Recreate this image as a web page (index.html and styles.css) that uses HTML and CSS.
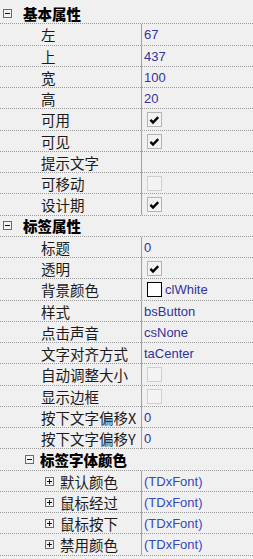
FILE: index.html
```html
<!DOCTYPE html>
<html lang="zh-CN">
<head>
    <meta charset="UTF-8">
    <title>属性</title>
    <link rel="stylesheet" href="styles.css">
</head>
<body>
    <div class="inspector">
        <div class="group">
            <svg class="toggle" viewBox="0 0 9 9"><rect x="0.5" y="0.5" width="8" height="8" /><path d="M2 4.5h5" /></svg>
            <span>基本属性</span>
        </div>
        <div class="row"><div class="name">左</div><div class="value">67</div></div>
        <div class="row"><div class="name">上</div><div class="value">437</div></div>
        <div class="row"><div class="name">宽</div><div class="value">100</div></div>
        <div class="row"><div class="name">高</div><div class="value">20</div></div>
        <div class="row"><div class="name">可用</div><div class="value"><span class="check on"><svg viewBox="0 0 14 14"><path d="M2.6 7.4l2.8 2.8 5.6-5.8" /></svg></span></div></div>
        <div class="row"><div class="name">可见</div><div class="value"><span class="check on"><svg viewBox="0 0 14 14"><path d="M2.6 7.4l2.8 2.8 5.6-5.8" /></svg></span></div></div>
        <div class="row"><div class="name">提示文字</div><div class="value"></div></div>
        <div class="row"><div class="name">可移动</div><div class="value"><span class="check off"></span></div></div>
        <div class="row"><div class="name">设计期</div><div class="value"><span class="check on"><svg viewBox="0 0 14 14"><path d="M2.6 7.4l2.8 2.8 5.6-5.8" /></svg></span></div></div>

        <div class="group">
            <svg class="toggle" viewBox="0 0 9 9"><rect x="0.5" y="0.5" width="8" height="8" /><path d="M2 4.5h5" /></svg>
            <span>标签属性</span>
        </div>
        <div class="row"><div class="name">标题</div><div class="value">0</div></div>
        <div class="row"><div class="name">透明</div><div class="value"><span class="check on"><svg viewBox="0 0 14 14"><path d="M2.6 7.4l2.8 2.8 5.6-5.8" /></svg></span></div></div>
        <div class="row"><div class="name">背景颜色</div><div class="value"><span class="swatch"></span>clWhite</div></div>
        <div class="row"><div class="name">样式</div><div class="value">bsButton</div></div>
        <div class="row"><div class="name">点击声音</div><div class="value">csNone</div></div>
        <div class="row"><div class="name">文字对齐方式</div><div class="value">taCenter</div></div>
        <div class="row"><div class="name">自动调整大小</div><div class="value"><span class="check off"></span></div></div>
        <div class="row"><div class="name">显示边框</div><div class="value"><span class="check off"></span></div></div>
        <div class="row"><div class="name">按下文字偏移X</div><div class="value">0</div></div>
        <div class="row"><div class="name">按下文字偏移Y</div><div class="value">0</div></div>

        <div class="group sub">
            <svg class="toggle" viewBox="0 0 9 9"><rect x="0.5" y="0.5" width="8" height="8" /><path d="M2 4.5h5" /></svg>
            <span>标签字体颜色</span>
        </div>
        <div class="row"><div class="name font"><svg class="toggle" viewBox="0 0 9 9"><rect x="0.5" y="0.5" width="8" height="8" /><path d="M2 4.5h5M4.5 2v5" /></svg>默认颜色</div><div class="value link">(TDxFont)</div></div>
        <div class="row"><div class="name font"><svg class="toggle" viewBox="0 0 9 9"><rect x="0.5" y="0.5" width="8" height="8" /><path d="M2 4.5h5M4.5 2v5" /></svg>鼠标经过</div><div class="value link">(TDxFont)</div></div>
        <div class="row"><div class="name font"><svg class="toggle" viewBox="0 0 9 9"><rect x="0.5" y="0.5" width="8" height="8" /><path d="M2 4.5h5M4.5 2v5" /></svg>鼠标按下</div><div class="value link">(TDxFont)</div></div>
        <div class="row"><div class="name font"><svg class="toggle" viewBox="0 0 9 9"><rect x="0.5" y="0.5" width="8" height="8" /><path d="M2 4.5h5M4.5 2v5" /></svg>禁用颜色</div><div class="value link">(TDxFont)</div></div>
    </div>
</body>
</html>
```

FILE: styles.css
```css
body {
    margin: 0;
    background: #f0f0f0;
    font-family: "Noto Sans CJK SC", sans-serif;
    color: #1a1a1a;
}

.inspector {
    width: 253px;
    padding-top: 3px;
}

.group,
.row {
    height: 21.25px;
    box-sizing: border-box;
    border-bottom: 1px dotted #9a9a9a;
}

.group {
    display: flex;
    align-items: center;
    padding-left: 3px;
    font-size: 14.5px;
    font-weight: 900;
    color: #000;
    white-space: nowrap;
}

.group span {
    margin-left: 11px;
}

.group.sub {
    padding-left: 25px;
}

.group.sub span {
    margin-left: 6px;
}

.toggle {
    width: 9px;
    height: 9px;
    flex: none;
}

.toggle rect {
    fill: #f4f4f4;
    stroke: #6a6a6a;
}

.toggle path {
    stroke: #111;
    stroke-width: 1;
    fill: none;
}

.row {
    display: grid;
    grid-template-columns: 141px 1fr;
}

.name {
    display: flex;
    align-items: center;
    padding-left: 41px;
    font-size: 14.5px;
    white-space: nowrap;
}

.name.font {
    padding-left: 45px;
}

.name.font .toggle {
    margin-right: 6px;
}

.value {
    display: flex;
    align-items: center;
    border-left: 1px solid #a0a0a0;
    padding-left: 2px;
    font-family: "Liberation Sans", Arial, sans-serif;
    font-size: 13px;
    color: #33339a;
}

.value.link {
    color: #3548c0;
}

.check {
    width: 15px;
    height: 15px;
    box-sizing: border-box;
    margin-left: 3px;
    border: 1px solid #b4b4b4;
    background: #f3f3f3;
}

.check.off {
    border-color: #cfcfcf;
}

.check svg {
    display: block;
    width: 13px;
    height: 13px;
}

.check path {
    fill: none;
    stroke: #000;
    stroke-width: 2.6;
}

.swatch {
    width: 15px;
    height: 15px;
    box-sizing: border-box;
    margin-left: 3px;
    margin-right: 3px;
    border: 1px solid #000;
    background: #fff;
}
```
